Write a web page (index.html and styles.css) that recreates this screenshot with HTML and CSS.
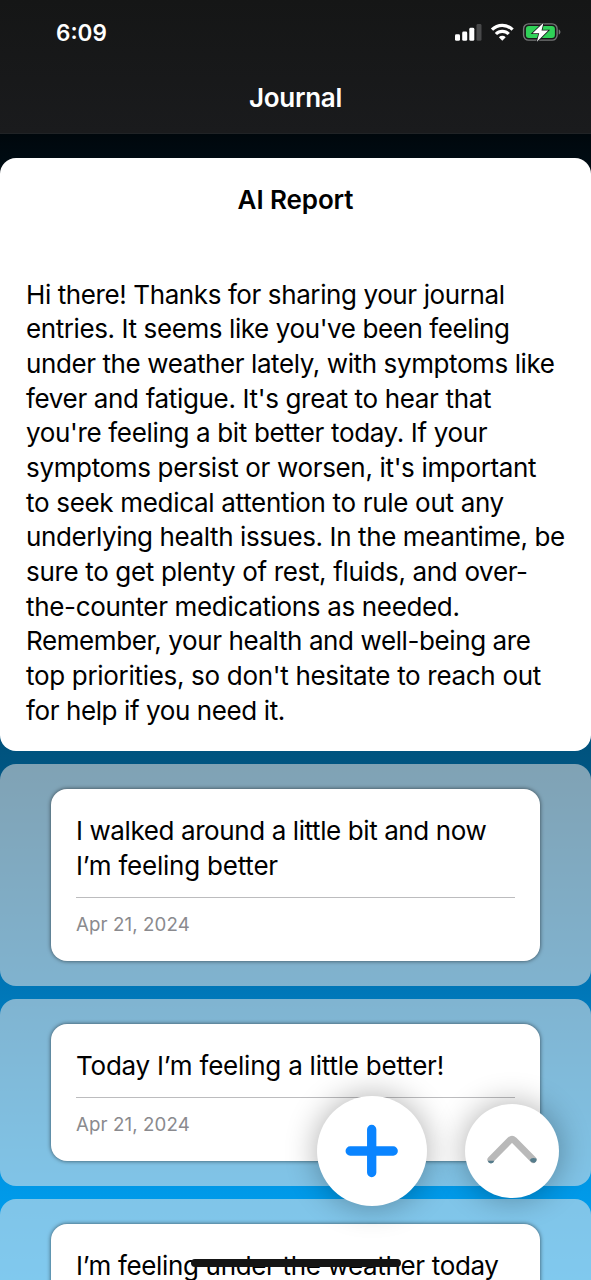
FILE: index.html
```html
<!DOCTYPE html>
<html lang="en">
<head>
    <meta charset="UTF-8">
    <meta name="viewport" content="width=device-width, initial-scale=1.0">
    <title>Journal</title>
    <link rel="stylesheet" href="styles.css">
</head>
<body>
    <div class="screen">
        <header class="header">
            <div class="status-bar">
                <span class="time">6:09</span>
                <svg class="status-icons" width="108" height="22" viewBox="0 0 108 22">
                    <rect x="1" y="12.2" width="5" height="6.6" rx="1.4" fill="#fff"/>
                    <rect x="8.2" y="9.6" width="5" height="9.2" rx="1.4" fill="#fff"/>
                    <rect x="15.3" y="5.8" width="5" height="13" rx="1.4" fill="#fff"/>
                    <rect x="22.5" y="2" width="5" height="16.8" rx="1.4" fill="#48494a"/>
                    <g fill="none" stroke="#fff" stroke-width="3.2">
                        <path d="M38 7.6a14.6 14.6 0 0 1 20.6 0"/>
                        <path d="M41.9 12a9 9 0 0 1 12.8 0"/>
                    </g>
                    <path d="M44.9 15.200a4.900 4.900 0 0 1 6.800 0l-3.400 3.500z" fill="#fff"/>
                    <rect x="69.6" y="1.9" width="33.5" height="16.2" rx="5" fill="none" stroke="#747576" stroke-width="1.4"/>
                    <rect x="71.9" y="4" width="29" height="12" rx="3" fill="#30d158"/>
                    <path d="M104.7 7.500c2.300.5 2.300 4.500 0 5z" fill="#747576"/>
                    <path d="M89.5.8 78.600 11.300h6.600l-2.300 8.500L94.200 8.500h-6.700z" fill="#fff" stroke="#17181a" stroke-width="1.6" paint-order="stroke"/>
                </svg>
            </div>
            <h1 class="title">Journal</h1>
        </header>

        <main class="feed">
            <section class="report">
                <h2 class="report-title">AI Report</h2>
                <p class="report-text">
                    Hi there! Thanks for sharing your journal<br>
                    entries. It seems like you've been feeling<br>
                    under the weather lately, with symptoms like<br>
                    <span class="loose">fever and fatigue. It's great to hear that</span><br>
                    <span class="loose">you're feeling a bit better today. If your</span><br>
                    <span class="loose">symptoms persist or worsen, it's important</span><br>
                    <span class="looser">to seek medical attention to rule out any</span><br>
                    underlying health issues. In the meantime, be<br>
                    <span class="loose">sure to get plenty of rest, fluids, and over-</span><br>
                    <span class="loose">the-counter medications as needed.</span><br>
                    Remember, your health and well-being are<br>
                    <span class="looser">top priorities, so don't hesitate to reach out</span><br>
                    for help if you need it.
                </p>
            </section>

            <section class="entry">
                <div class="entry-card">
                    <p class="entry-text">I walked around a little bit and now<br><span class="loosest">I’m feeling better</span></p>
                    <div class="entry-date">Apr 21, 2024</div>
                </div>
            </section>
            <section class="entry">
                <div class="entry-card">
                    <p class="entry-text"><span class="loosest">Today I’m feeling a little better!</span></p>
                    <div class="entry-date">Apr 21, 2024</div>
                </div>
            </section>
            <section class="entry">
                <div class="entry-card">
                    <p class="entry-text"><span class="loose">I’m feeling under the weather today</span></p>
                </div>
            </section>
        </main>

        <!-- floating buttons -->
        <button class="fab fab-add" aria-label="Add entry">
            <svg width="80" height="80" viewBox="0 0 80 80">
                <path d="M39.7 18.500v43M18.200 40h43" fill="none" stroke="#0a84ff" stroke-width="9.3" stroke-linecap="round"/>
            </svg>
        </button>
        <button class="fab fab-top" aria-label="Scroll to top">
            <svg width="54" height="34" viewBox="0 0 54 34">
                <path d="M5.800 25.600 25 6.200Q27 4.300 29 6.200L48.200 25.600" fill="none" stroke="#b9b9b9" stroke-width="6.8" stroke-linecap="round"/>
                <path d="M2.700 26.800h6.600a3.400 3.400 0 0 1-6.600 0zM44.800 26q1.500-3 6.500-1.500 1 3-1.700 4.200-3 .8-4.800-2.700z" fill="#557c8b"/>
            </svg>
        </button>
        <div class="home-indicator"></div>
    </div>
</body>
</html>
```

FILE: styles.css
```css
* {
    box-sizing: border-box;
}
body {
    margin: 0;
    font-family: Inter, "Liberation Sans", sans-serif;
    color: #000;
}
h1, h2, p {
    margin: 0;
}
.screen {
    position: relative;
    width: 591px;
    height: 1280px;
    overflow: hidden;
    background: linear-gradient(#000 90px, #00090f 145px, #005480 758px, #0077b8 992px, #0099e8 1192px, #00a2f5 1280px);
}

/* header */
.header {
    height: 134px;
    background: linear-gradient(#151616, #1a1b1d);
    border-bottom: 1px solid #202326;
    color: #fff;
}
.status-bar {
    display: flex;
    justify-content: space-between;
    align-items: center;
    height: 66px;
    padding: 0 29px 0 56px;
}
.time {
    padding-bottom: 2px;
    font-size: 22.5px;
    font-weight: 600;
}
.title {
    font-size: 26px;
    font-weight: 600;
    line-height: 64px;
    text-align: center;
    letter-spacing: -0.3px;
}

/* report */
.feed {
    display: flex;
    flex-direction: column;
    gap: 12.6px;
    padding-top: 23.6px;
}
.report {
    height: 593.7px;
    padding: 24px 0 0 26px;
    border-radius: 16px;
    background: #fff;
}
.report-title {
    margin: 0 26px 61px 0;
    font-size: 26px;
    font-weight: 600;
    line-height: 35px;
    text-align: center;
    letter-spacing: -0.1px;
}
.report-text, .entry-text {
    font-size: 26px;
    line-height: 34.67px;
    letter-spacing: -0.4px;
    white-space: nowrap;
}
.loose {
    letter-spacing: -0.34px;
}
.looser {
    letter-spacing: -0.31px;
}
.loosest {
    letter-spacing: -0.22px;
}

/* journal entries */
.entry {
    padding: 25px 51px;
    border-radius: 16px;
    background: rgba(255, 239, 232, 0.5);
}
.entry-card {
    padding: 25px 25px 23.6px;
    border-radius: 16px;
    background: #fff;
    box-shadow: 0 0 4px rgba(0, 0, 0, 0.6);
}
.entry-text {
    padding-bottom: 13.4px;
    border-bottom: 1px solid #bcbcbe;
}
.entry-date {
    padding-top: 14px;
    font-size: 18.7px;
    line-height: 26px;
    letter-spacing: 0.1px;
    color: #8a8a8e;
}

/* floating controls */
.fab {
    position: absolute;
    display: flex;
    align-items: center;
    justify-content: center;
    padding: 0;
    border: none;
    border-radius: 50%;
    background: #fff;
    box-shadow: 0 0 32px rgba(0, 0, 0, 0.33);
}
.fab-add {
    left: 317px;
    top: 1096px;
    width: 110px;
    height: 110px;
}
.fab-top {
    left: 465px;
    top: 1104px;
    width: 94px;
    height: 94px;
}
.home-indicator {
    position: absolute;
    left: 191px;
    top: 1259px;
    width: 210px;
    height: 8px;
    border-radius: 4px;
    background: #151515;
}
```
